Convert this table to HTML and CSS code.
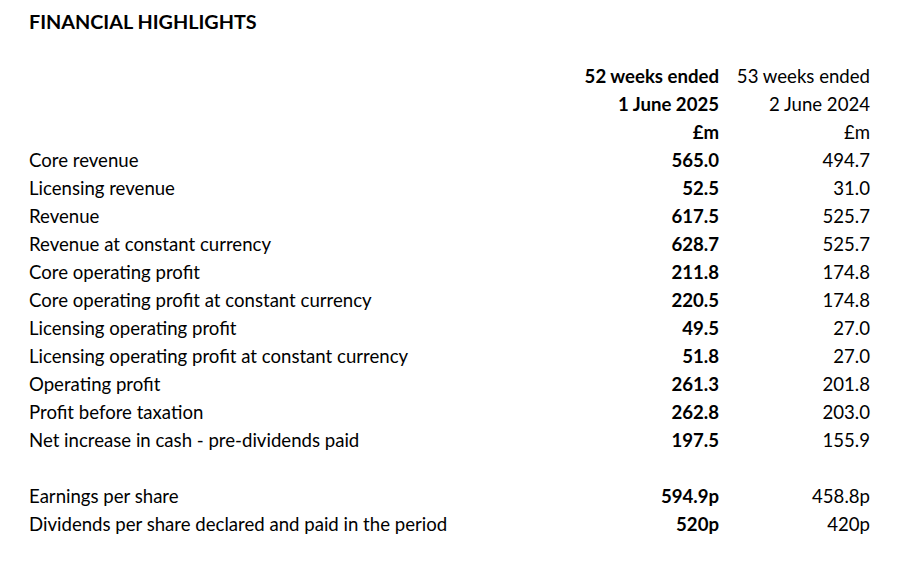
FILE: index.html
```html
<!DOCTYPE html>
<html>
<head>
<meta charset="utf-8">
<link rel="stylesheet" href="styles.css">
</head>
<body>
<div class="page">
  <h1 class="title">FINANCIAL HIGHLIGHTS</h1>
  <div class="table">
    <div class="cell"></div><div class="cell num b">52 weeks ended</div><div class="cell num">53 weeks ended</div>
    <div class="cell"></div><div class="cell num b">1 June 2025</div><div class="cell num">2 June 2024</div>
    <div class="cell"></div><div class="cell num b">£m</div><div class="cell num">£m</div>
    <div class="cell">Core revenue</div><div class="cell num b">565.0</div><div class="cell num">494.7</div>
    <div class="cell">Licensing revenue</div><div class="cell num b">52.5</div><div class="cell num">31.0</div>
    <div class="cell">Revenue</div><div class="cell num b">617.5</div><div class="cell num">525.7</div>
    <div class="cell">Revenue at constant currency</div><div class="cell num b">628.7</div><div class="cell num">525.7</div>
    <div class="cell">Core operating profit</div><div class="cell num b">211.8</div><div class="cell num">174.8</div>
    <div class="cell">Core operating profit at constant currency</div><div class="cell num b">220.5</div><div class="cell num">174.8</div>
    <div class="cell">Licensing operating profit</div><div class="cell num b">49.5</div><div class="cell num">27.0</div>
    <div class="cell">Licensing operating profit at constant currency</div><div class="cell num b">51.8</div><div class="cell num">27.0</div>
    <div class="cell">Operating profit</div><div class="cell num b">261.3</div><div class="cell num">201.8</div>
    <div class="cell">Profit before taxation</div><div class="cell num b">262.8</div><div class="cell num">203.0</div>
    <div class="cell">Net increase in cash - pre-dividends paid</div><div class="cell num b">197.5</div><div class="cell num">155.9</div>
    <div class="cell"></div><div class="cell num b"></div><div class="cell num"></div>
    <div class="cell">Earnings per share</div><div class="cell num b">594.9p</div><div class="cell num">458.8p</div>
    <div class="cell">Dividends per share declared and paid in the period</div><div class="cell num b">520p</div><div class="cell num">420p</div>
  </div>
</div>
</body>
</html>
```

FILE: styles.css
```css
html, body {
  margin: 0;
  padding: 0;
  background: #ffffff;
}
.page {
  width: 908px;
  height: 561px;
  padding: 7px 0 0 29px;
  box-sizing: border-box;
  font-family: "Lato", "Open Sans", sans-serif;
  color: #000000;
}
.title {
  margin: 0 0 27px 0;
  font-size: 19.8px;
  font-weight: 700;
  line-height: 28px;
}
.table {
  display: grid;
  grid-template-columns: 555px 135px 151px;
  grid-auto-rows: 28px;
  font-size: 18.6px;
  line-height: 28px;
}
.cell {
  white-space: nowrap;
}
.num {
  text-align: right;
}
.b {
  font-weight: 700;
}
```
